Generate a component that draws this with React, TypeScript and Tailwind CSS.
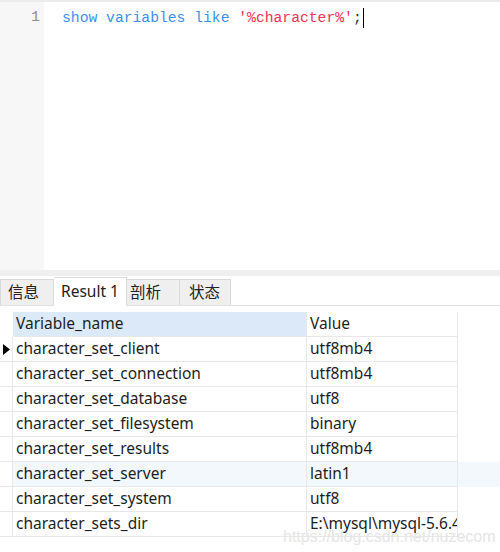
import React from "react";

const rows: [string, string][] = [
  ["character_set_client", "utf8mb4"],
  ["character_set_connection", "utf8mb4"],
  ["character_set_database", "utf8"],
  ["character_set_filesystem", "binary"],
  ["character_set_results", "utf8mb4"],
  ["character_set_server", "latin1"],
  ["character_set_system", "utf8"],
  ["character_sets_dir", "E:\\mysql\\mysql-5.6.4"],
];

export default function App() {
  return (
    <div
      className="relative w-[500px] h-[552px] bg-white flex flex-col overflow-hidden"
      style={{ fontFamily: '"Noto Sans", "Noto Sans CJK SC", sans-serif' }}
    >
      <div className="h-[2px] bg-[#ececec]" />
      {/* editor */}
      <div className="flex h-[268px]">
        <div className="w-[44px] bg-[#f7f7f7] flex justify-end pr-[4px] pt-[6px] text-[15px] text-[#8e8e8e] leading-[20px]" style={{ fontFamily: '"Liberation Mono", monospace' }}>
          1
        </div>
        <div className="flex-1 pl-[18px] pt-[6px] text-[14.7px] leading-[20px] flex items-start whitespace-pre" style={{ fontFamily: '"Liberation Mono", monospace' }}>
          <span className="text-[#3d8ff0]">{"show variables like "}</span>
          <span className="text-[#ea3553]">'%character%'</span>
          <span className="text-[#333]">;</span>
          <span className="inline-block w-[1px] h-[20px] bg-black ml-[1px]" />
        </div>
      </div>
      {/* splitter */}
      <div className="h-[6px] bg-[#efefef]" />
      {/* tabs */}
      <div className="flex h-[30px] items-end border-b border-[#e2e2e2] text-[15.5px] text-[#222]">
        <div className="w-[54px] h-[26px] bg-[#efefef] border border-[#dadada] border-b-0 flex items-center pl-[7px]">信息</div>
        <div className="w-[73px] h-[29px] bg-white border border-[#dadada] border-b-0 border-l-0 flex items-center pl-[7px] -mb-[1px]">Result 1</div>
        <div className="w-[53px] h-[26px] bg-[#efefef] border border-[#dadada] border-b-0 border-l-0 flex items-center pl-[3px]">剖析</div>
        <div className="w-[51px] h-[26px] bg-[#efefef] border border-[#dadada] border-b-0 border-l-0 flex items-center pl-[9px]">状态</div>
      </div>
      {/* table */}
      <div className="pt-[6px] text-[15.5px] text-[#1e1e1e]">
        <div className="flex h-[25px]">
          <div className="w-[13px]" />
          <div className="w-[294px] bg-[#dbe9f8] border-r border-b border-[#e8e8e8] flex items-center pl-[3px]">Variable_name</div>
          <div className="w-[151px] border-r border-b border-[#e8e8e8] flex items-center pl-[3px]">Value</div>
        </div>
        {rows.map(([k, v], i) => (
          <div key={k} className={`flex h-[25px] ${i === 5 ? "bg-[#f3f8fd]" : ""}`}>
            <div className="w-[13px] border-r border-b border-[#e8e8e8] bg-white flex items-center justify-center">
              {i === 0 && (
                <svg width="7" height="11" viewBox="0 0 7 11"><path d="M0 0 L7 5.5 L0 11 Z" fill="#000" /></svg>
              )}
            </div>
            <div className="w-[294px] border-r border-b border-[#e8e8e8] flex items-center pl-[3px]">{k}</div>
            <div className="w-[151px] border-r border-b border-[#e8e8e8] flex items-center pl-[3px] overflow-hidden whitespace-nowrap">{v}</div>
          </div>
        ))}
      </div>
      <div className="absolute left-[283px] top-[525px] text-[16px] text-[#e6e6e6] whitespace-nowrap" style={{ fontFamily: '"Liberation Sans", sans-serif' }}>
        https://blog.csdn.net/nuzecom
      </div>
    </div>
  );
}
